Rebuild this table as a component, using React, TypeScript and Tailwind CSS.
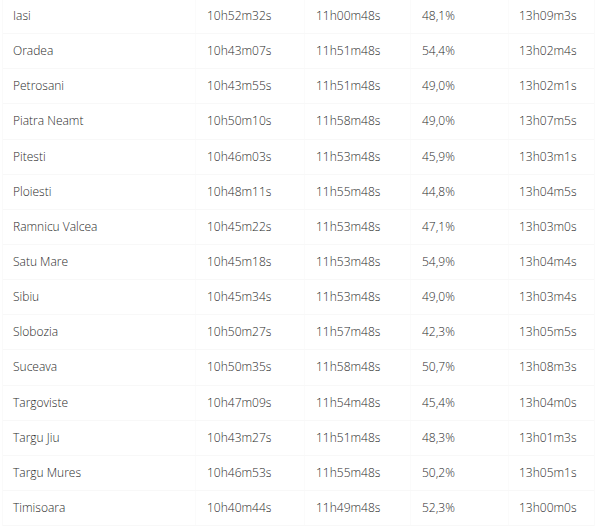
import React from "react";

const rows: [string, string, string, string, string][] = [
  ["Iasi", "10h52m32s", "11h00m48s", "48,1%", "13h09m3s"],
  ["Oradea", "10h43m07s", "11h51m48s", "54,4%", "13h02m4s"],
  ["Petrosani", "10h43m55s", "11h51m48s", "49,0%", "13h02m1s"],
  ["Piatra Neamt", "10h50m10s", "11h58m48s", "49,0%", "13h07m5s"],
  ["Pitesti", "10h46m03s", "11h53m48s", "45,9%", "13h03m1s"],
  ["Ploiesti", "10h48m11s", "11h55m48s", "44,8%", "13h04m5s"],
  ["Ramnicu Valcea", "10h45m22s", "11h53m48s", "47,1%", "13h03m0s"],
  ["Satu Mare", "10h45m18s", "11h53m48s", "54,9%", "13h04m4s"],
  ["Sibiu", "10h45m34s", "11h53m48s", "49,0%", "13h03m4s"],
  ["Slobozia", "10h50m27s", "11h57m48s", "42,3%", "13h05m5s"],
  ["Suceava", "10h50m35s", "11h58m48s", "50,7%", "13h08m3s"],
  ["Targoviste", "10h47m09s", "11h54m48s", "45,4%", "13h04m0s"],
  ["Targu Jiu", "10h43m27s", "11h51m48s", "48,3%", "13h01m3s"],
  ["Targu Mures", "10h46m53s", "11h55m48s", "50,2%", "13h05m1s"],
  ["Timisoara", "10h40m44s", "11h49m48s", "52,3%", "13h00m0s"],
];

export default function App() {
  return (
    <div className="w-[598px] h-[530px] overflow-hidden bg-white">
      <div
        className="ml-[2px] w-[593px] mt-[-1px] border-l border-r border-[#fafafa] text-[12px] font-light text-[#2a2a2a]"
        style={{ fontFamily: '"Open Sans", "Liberation Sans", sans-serif' }}
      >
        {rows.map((r, i) => (
          <div
            key={i}
            className="grid grid-cols-[193px_109px_106px_98px_85px] h-[35.15px] items-center border-b border-[#f8f8f8]"
          >
            <div className="pl-[10px] h-full flex items-center border-r border-[#fbfbfb]">{r[0]}</div>
            <div className="pl-[11px] h-full flex items-center border-r border-[#fbfbfb]">{r[1]}</div>
            <div className="pl-[11px] h-full flex items-center border-r border-[#fbfbfb]">{r[2]}</div>
            <div className="pl-[11px] h-full flex items-center border-r border-[#fbfbfb]">{r[3]}</div>
            <div className="pl-[10px] h-full flex items-center">{r[4]}</div>
          </div>
        ))}
      </div>
    </div>
  );
}
